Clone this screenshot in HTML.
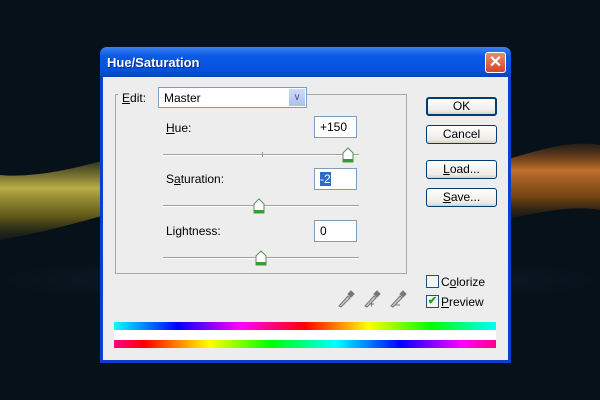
<!DOCTYPE html>
<html><head><style>
*{margin:0;padding:0;box-sizing:border-box}
body{width:600px;height:400px;overflow:hidden;background:#07111a;font-family:"Liberation Sans",sans-serif;font-size:12px;color:#000;position:relative}
.a{position:absolute}
.dlg{left:100px;top:47px;width:411px;height:316px;background:#0a3fd0;border-radius:7px 7px 0 0}
.title{left:0;top:0;width:411px;height:30px;border-radius:7px 7px 0 0;background:linear-gradient(#3b82f0,#0a5ae6 30%,#0550dc 80%,#0842b8)}
.title span{position:absolute;left:7px;top:8px;color:#fff;font-weight:bold;font-size:13px;text-shadow:1px 1px #0a2a80}
.close{left:385px;top:5px;width:21px;height:21px;background:linear-gradient(#e88a6c,#d4462a);border:1px solid #fff;border-radius:3px;color:#fff;font-weight:bold;font-size:16px;text-align:center;line-height:19px}
.body{left:3px;top:30px;width:405px;height:283px;background:#ededed}
.grp{left:115px;top:94px;width:292px;height:180px;border:1px solid #a8a8a8}
.inp{background:#fff;border:1px solid #7f9db9;height:22px;width:43px;padding:3px 5px;font-size:12px}
.btn{left:426px;width:71px;height:19px;border:1px solid #003c74;border-radius:3px;background:linear-gradient(#fff,#ecebe6 80%,#d6d0c5);text-align:center;font-size:12px;line-height:17px}
.trk{height:2px;border-top:1px solid #a0a0a0;border-bottom:1px solid #fff;width:196px;left:163px}
.th{width:12px;height:16px}
.cb{width:13px;height:13px;border:1px solid #1c5180;background:#f4f4f0;left:426px}
u{text-decoration:underline}
</style></head><body>
<div class="a" style="left:0;top:250px;width:600px;height:60px;background:radial-gradient(ellipse 300px 25px at 300px 30px,rgba(40,60,80,.35),transparent)"></div>
<svg class="a" style="left:0;top:0" width="600" height="400">
<defs>
<linearGradient id="y" x1="0" y1="0" x2="0" y2="1"><stop offset="0" stop-color="#c8b030" stop-opacity=".2"/><stop offset=".35" stop-color="#d8c850" stop-opacity=".85"/><stop offset=".7" stop-color="#8a7a18" stop-opacity=".7"/><stop offset="1" stop-color="#4a4010" stop-opacity=".15"/></linearGradient>
<linearGradient id="o" x1="0" y1="0" x2="0" y2="1"><stop offset="0" stop-color="#a05010" stop-opacity=".2"/><stop offset=".35" stop-color="#e08030" stop-opacity=".85"/><stop offset=".7" stop-color="#a05a10" stop-opacity=".7"/><stop offset="1" stop-color="#503010" stop-opacity=".15"/></linearGradient>
</defs>
<path d="M0 175 C30 178 70 170 105 160 L105 215 C70 225 30 235 0 240Z" fill="url(#y)"/>
<path d="M505 160 C540 150 570 140 600 145 L600 210 C570 205 540 212 505 220Z" fill="url(#o)"/>
</svg>
<div class="a dlg">
 <div class="a title"><span>Hue/Saturation</span></div>
 <div class="a close">✕</div>
 <div class="a body"></div>
</div>
<div class="a grp"></div>
<div class="a" style="left:118px;top:90px;width:40px;height:14px;background:#ededed"></div>
<div class="a" style="left:122px;top:91px"><u>E</u>dit:</div>
<div class="a" style="left:158px;top:87px;width:149px;height:21px;border:1px solid #7f9db9;background:#fff;padding:3px 5px">Master</div>
<div class="a" style="left:289px;top:89px;width:16px;height:17px;background:linear-gradient(#d0dcf8,#aac0ee);color:#4d6185;font-size:10px;text-align:center;line-height:17px">&#x2228;</div>
<div class="a" style="left:166px;top:121px"><u>H</u>ue:</div>
<div class="a inp" style="left:314px;top:116px">+150</div>
<div class="a trk" style="top:154px"></div>
<div class="a" style="left:262px;top:152px;width:1px;height:5px;background:#999"></div>
<div class="a" style="left:166px;top:172px">S<u>a</u>turation:</div>
<div class="a inp" style="left:314px;top:168px"><span style="background:#316ac5;color:#fff">-2</span></div>
<div class="a trk" style="top:205px"></div>
<div class="a" style="left:166px;top:224px">Li<u>g</u>htness:</div>
<div class="a inp" style="left:314px;top:220px">0</div>
<div class="a trk" style="top:257px"></div>
<svg class="a th" style="left:342px;top:147px" viewBox="0 0 12 16"><path d="M1 15V6L6 1L11 6V15Z" fill="#fff" stroke="#5c8c5c"/><rect x="1" y="12" width="10" height="3" fill="#3a9a3a"/></svg>
<svg class="a th" style="left:253px;top:198px" viewBox="0 0 12 16"><path d="M1 15V6L6 1L11 6V15Z" fill="#fff" stroke="#5c8c5c"/><rect x="1" y="12" width="10" height="3" fill="#3a9a3a"/></svg>
<svg class="a th" style="left:255px;top:250px" viewBox="0 0 12 16"><path d="M1 15V6L6 1L11 6V15Z" fill="#fff" stroke="#5c8c5c"/><rect x="1" y="12" width="10" height="3" fill="#3a9a3a"/></svg>
<div class="a btn" style="top:97px;border-width:2px;line-height:15px">OK</div>
<div class="a btn" style="top:125px">Cancel</div>
<div class="a btn" style="top:160px"><u>L</u>oad...</div>
<div class="a btn" style="top:188px"><u>S</u>ave...</div>
<div class="a cb" style="top:275px"></div>
<div class="a" style="left:441px;top:275px">C<u>o</u>lorize</div>
<div class="a cb" style="top:295px;color:#21a121;font-size:11px;line-height:11px;text-align:center;font-weight:bold">✔</div>
<div class="a" style="left:441px;top:295px"><u>P</u>review</div>
<svg class="a" style="left:336px;top:287px" width="75" height="22" viewBox="0 0 75 22">
<g stroke="#777" fill="#ccc" stroke-width="1">
<path d="M3 19L12 9L14 11L5 20Z"/><path d="M12 7L15 4L18 7L15 10Z" fill="#777"/>
<path d="M29 19L38 9L40 11L31 20Z"/><path d="M38 7L41 4L44 7L41 10Z" fill="#777"/><path d="M33 17H38M35.5 14.5V19.5" fill="none"/>
<path d="M55 19L64 9L66 11L57 20Z"/><path d="M64 7L67 4L70 7L67 10Z" fill="#777"/><path d="M59 18H64" fill="none"/>
</g></svg>
<div class="a" style="left:114px;top:322px;width:382px;height:8px;background:linear-gradient(90deg,#0ff,#00f 16.6%,#f0f 33%,#f00 50%,#ff0 66.6%,#0f0 83%,#0ff)"></div>
<div class="a" style="left:114px;top:330px;width:382px;height:10px;background:#fff"></div>
<div class="a" style="left:114px;top:340px;width:382px;height:8px;background:linear-gradient(90deg,#f08,#f00 8%,#ff0 25%,#0f0 41%,#0ff 58%,#00f 75%,#f0f 91%,#f08)"></div>
</body></html>
